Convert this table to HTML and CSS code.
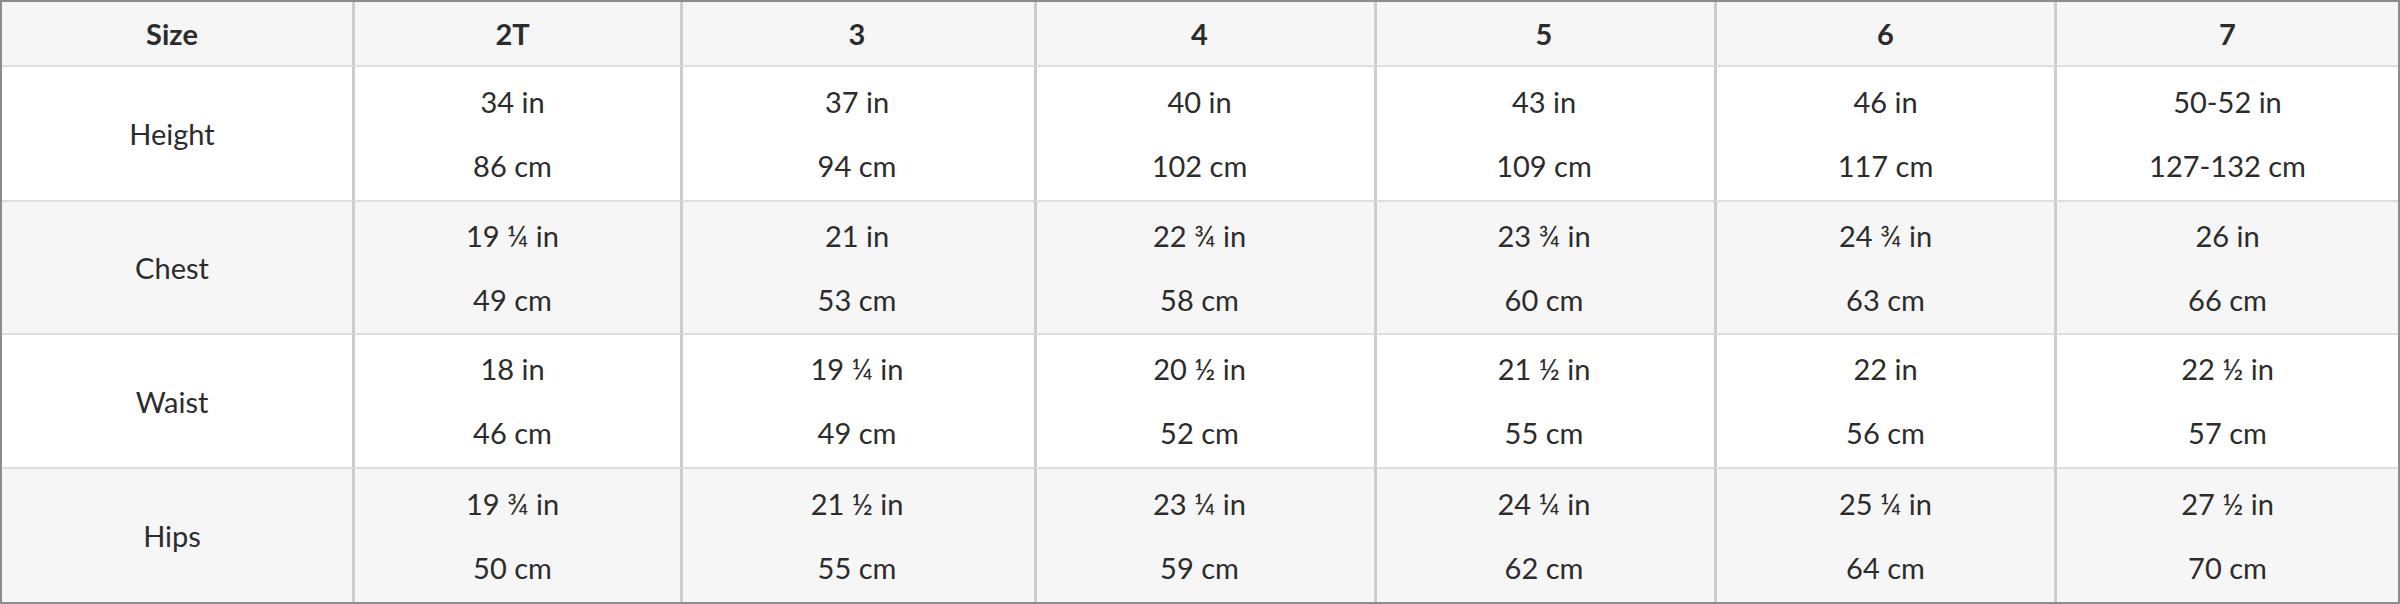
FILE: index.html
```html
<!DOCTYPE html>
<html lang="en">
<head>
<meta charset="utf-8">
<title>Size chart</title>
<link rel="stylesheet" href="styles.css">
</head>
<body>
<table class="chart">
  <colgroup>
    <col class="c0"><col class="c1"><col class="c2"><col class="c3"><col class="c4"><col class="c5"><col class="c6">
  </colgroup>
  <thead>
    <tr class="head">
      <th>Size</th><th>2T</th><th>3</th><th>4</th><th>5</th><th>6</th><th>7</th>
    </tr>
  </thead>
  <tbody>
    <tr class="r1 white">
      <td class="label">Height</td>
      <td><span class="v">34 in</span><span class="v">86 cm</span></td>
      <td><span class="v">37 in</span><span class="v">94 cm</span></td>
      <td><span class="v">40 in</span><span class="v">102 cm</span></td>
      <td><span class="v">43 in</span><span class="v">109 cm</span></td>
      <td><span class="v">46 in</span><span class="v">117 cm</span></td>
      <td><span class="v">50-52 in</span><span class="v">127-132 cm</span></td>
    </tr>
    <tr class="r2 grey">
      <td class="label">Chest</td>
      <td><span class="v">19 ¼ in</span><span class="v">49 cm</span></td>
      <td><span class="v">21 in</span><span class="v">53 cm</span></td>
      <td><span class="v">22 ¾ in</span><span class="v">58 cm</span></td>
      <td><span class="v">23 ¾ in</span><span class="v">60 cm</span></td>
      <td><span class="v">24 ¾ in</span><span class="v">63 cm</span></td>
      <td><span class="v">26 in</span><span class="v">66 cm</span></td>
    </tr>
    <tr class="r3 white">
      <td class="label">Waist</td>
      <td><span class="v">18 in</span><span class="v">46 cm</span></td>
      <td><span class="v">19 ¼ in</span><span class="v">49 cm</span></td>
      <td><span class="v">20 ½ in</span><span class="v">52 cm</span></td>
      <td><span class="v">21 ½ in</span><span class="v">55 cm</span></td>
      <td><span class="v">22 in</span><span class="v">56 cm</span></td>
      <td><span class="v">22 ½ in</span><span class="v">57 cm</span></td>
    </tr>
    <tr class="r4 grey">
      <td class="label">Hips</td>
      <td><span class="v">19 ¾ in</span><span class="v">50 cm</span></td>
      <td><span class="v">21 ½ in</span><span class="v">55 cm</span></td>
      <td><span class="v">23 ¼ in</span><span class="v">59 cm</span></td>
      <td><span class="v">24 ¼ in</span><span class="v">62 cm</span></td>
      <td><span class="v">25 ¼ in</span><span class="v">64 cm</span></td>
      <td><span class="v">27 ½ in</span><span class="v">70 cm</span></td>
    </tr>
  </tbody>
</table>
</body>
</html>
```
FILE: styles.css
```css
html, body {
  margin: 0;
  padding: 0;
  background: #ffffff;
}

.chart {
  width: 2400px;
  table-layout: fixed;
  border-collapse: separate;
  border-spacing: 0;
  border: 2px solid #8c8c8c;
  font-family: Lato, "Liberation Sans", sans-serif;
  font-size: 29px;
  color: #2c2c2c;
}

.c0 { width: 350px; }
.c1 { width: 328px; }
.c2 { width: 354px; }
.c3 { width: 340px; }
.c4 { width: 340px; }
.c5 { width: 340px; }
.c6 { width: 344px; }

.chart th,
.chart td {
  padding: 0;
  text-align: center;
  vertical-align: middle;
  border-left: 3px solid #cdcdcd;
}

.chart th:nth-child(-n+2),
.chart td:nth-child(-n+2) {
  padding-right: 10px;
}

.chart th:nth-child(3),
.chart td:nth-child(3),
.chart th:nth-child(5),
.chart td:nth-child(5) {
  padding-right: 3px;
}

.chart th:nth-child(4),
.chart td:nth-child(4) {
  padding-right: 12px;
}

.chart th:first-child,
.chart td:first-child {
  border-left: none;
}

.chart td {
  border-top: 2px solid #dedede;
}

.head th {
  height: 63px;
  font-weight: 700;
  background: #f6f6f6;
}

.white td { background: #ffffff; }
.grey td { background: #f6f6f6; }

.r1 td { height: 133px; }
.r2 td { height: 131px; }
.r3 td { height: 132px; }
.r4 td { height: 133px; }

.v {
  display: block;
  line-height: 32px;
}

.v + .v {
  margin-top: 32px;
}
```
